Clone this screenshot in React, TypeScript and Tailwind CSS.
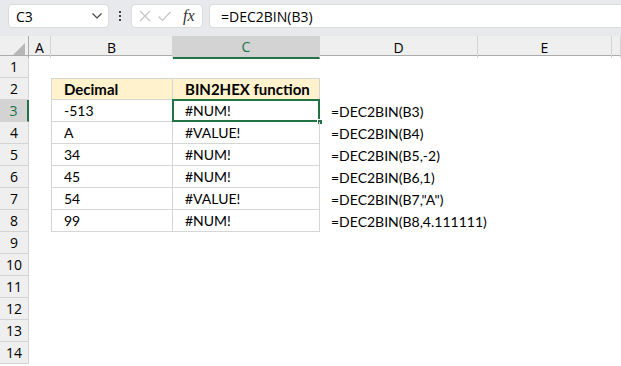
import React from 'react';

const cols = ['A', 'B', 'C', 'D', 'E', ''];
const gridCols = 'grid grid-cols-[29px_22px_122px_147px_158px_134px_1fr]';

type Row = { b?: string; c?: string; d?: string; head?: boolean };

const rows: Row[] = [
  {},
  { b: 'Decimal', c: 'BIN2HEX function', head: true },
  { b: '-513', c: '#NUM!', d: '=DEC2BIN(B3)' },
  { b: 'A', c: '#VALUE!', d: '=DEC2BIN(B4)' },
  { b: '34', c: '#NUM!', d: '=DEC2BIN(B5,-2)' },
  { b: '45', c: '#NUM!', d: '=DEC2BIN(B6,1)' },
  { b: '54', c: '#VALUE!', d: '=DEC2BIN(B7,"A")' },
  { b: '99', c: '#NUM!', d: '=DEC2BIN(B8,4.111111)' },
  {}, {}, {}, {}, {}, {},
];

const App: React.FC = () => (
  <div className="w-[621px] h-[366px] overflow-hidden bg-white font-['Lato','Liberation_Sans',sans-serif] text-[14px] text-black">
    {/* formula bar */}
    <div className="h-[36px] bg-[#e7e9ec] flex items-start pt-[4px] pl-[8px] gap-0">
      <div className="w-[101px] h-[24px] bg-white rounded-[4px] border border-[#dcdcdc] flex items-center justify-between pl-[7px] pr-[5px]">
        <span className="text-[14px] font-['Open_Sans',sans-serif]">C3</span>
        <svg width="12" height="8" viewBox="0 0 12 8"><path d="M1.5 1.5 L6 6 L10.5 1.5" fill="none" stroke="#444" strokeWidth="1.2" /></svg>
      </div>
      <div className="w-[22px] h-[24px] flex flex-col items-center justify-center gap-[2px]">
        <span className="w-[2px] h-[2px] bg-[#444]" />
        <span className="w-[2px] h-[2px] bg-[#444]" />
        <span className="w-[2px] h-[2px] bg-[#444]" />
      </div>
      <div className="w-[72px] h-[24px] bg-white rounded-[4px] border border-[#dcdcdc] flex items-center pl-[6px] gap-[5px]">
        <svg width="14" height="14" viewBox="0 0 14 14"><path d="M2 2 L12 12 M12 2 L2 12" stroke="#c4c4c4" strokeWidth="1.1" /></svg>
        <svg width="15" height="14" viewBox="0 0 15 14"><path d="M1.5 7.5 L5.5 11.5 L13.5 3" fill="none" stroke="#c4c4c4" strokeWidth="1.1" /></svg>
        <span className="ml-[6px] text-[16px] italic font-['Liberation_Serif',serif] text-[#333] leading-none">fx</span>
      </div>
      <div className="ml-[6px] flex-1 h-[24px] bg-white rounded-l-[4px] border border-r-0 border-[#dcdcdc] flex items-center pl-[11px] font-['Open_Sans',sans-serif] text-[14px]">
        =DEC2BIN(B3)
      </div>
    </div>

    {/* column headers */}
    <div className={`${gridCols} h-[20px] bg-[#efefef] border-b border-[#ababab]`}>
      <div className="relative border-r border-[#ababab]">
        <div className="absolute right-[3px] bottom-[3px] w-0 h-0 border-l-[12px] border-l-transparent border-b-[12px] border-b-[#b7b7b7]" />
      </div>
      {cols.map((c, i) => (
        <div
          key={i}
          className={`flex items-center justify-center text-[14px] font-['Open_Sans',sans-serif] border-r border-[#d4d4d4] ${
            c === 'C' ? 'bg-[#d3d3d3] text-[#217346] border-b-2 border-b-[#217346] -mb-[1px]' : ''
          }`}
        >
          {c}
        </div>
      ))}
    </div>

    {/* rows */}
    {rows.map((r, i) => {
      const n = i + 1;
      const inTable = n >= 2 && n <= 8;
      const sel = n === 3;
      const cell = `h-[22px] flex items-center pl-[12px] ${inTable ? 'border-r border-b border-[#d6d6d6]' : ''} ${r.head ? 'bg-[#fff2cc] font-bold text-[15px]' : ''}`;
      return (
        <div key={n} className={`${gridCols} h-[22px]`}>
          <div
            className={`flex items-center justify-center text-[14px] font-['Open_Sans',sans-serif] border-b border-[#d4d4d4] ${
              sel ? 'bg-[#d3d3d3] text-[#217346] border-r-2 border-r-[#217346]' : 'bg-[#efefef] border-r border-[#ababab]'
            }`}
          >
            {n}
          </div>
          <div />
          <div className={`${cell} ${inTable ? 'border-l' : ''} ${n === 2 ? 'border-t' : ''}`}>{r.b}</div>
          <div className={`${cell} ${n === 2 ? 'border-t' : ''} relative`}>
            {r.c}
            {sel && (
              <>
                <div className="absolute -left-[1px] -top-[1px] -right-[1px] -bottom-[1px] border-2 border-[#217346]" />
                <div className="absolute -right-[4px] -bottom-[4px] w-[6px] h-[6px] bg-[#217346] border border-white" />
              </>
            )}
          </div>
          <div className="h-[22px] flex items-center pl-[11px]">{r.d}</div>
          <div />
          <div />
        </div>
      );
    })}
  </div>
);

export default App;
